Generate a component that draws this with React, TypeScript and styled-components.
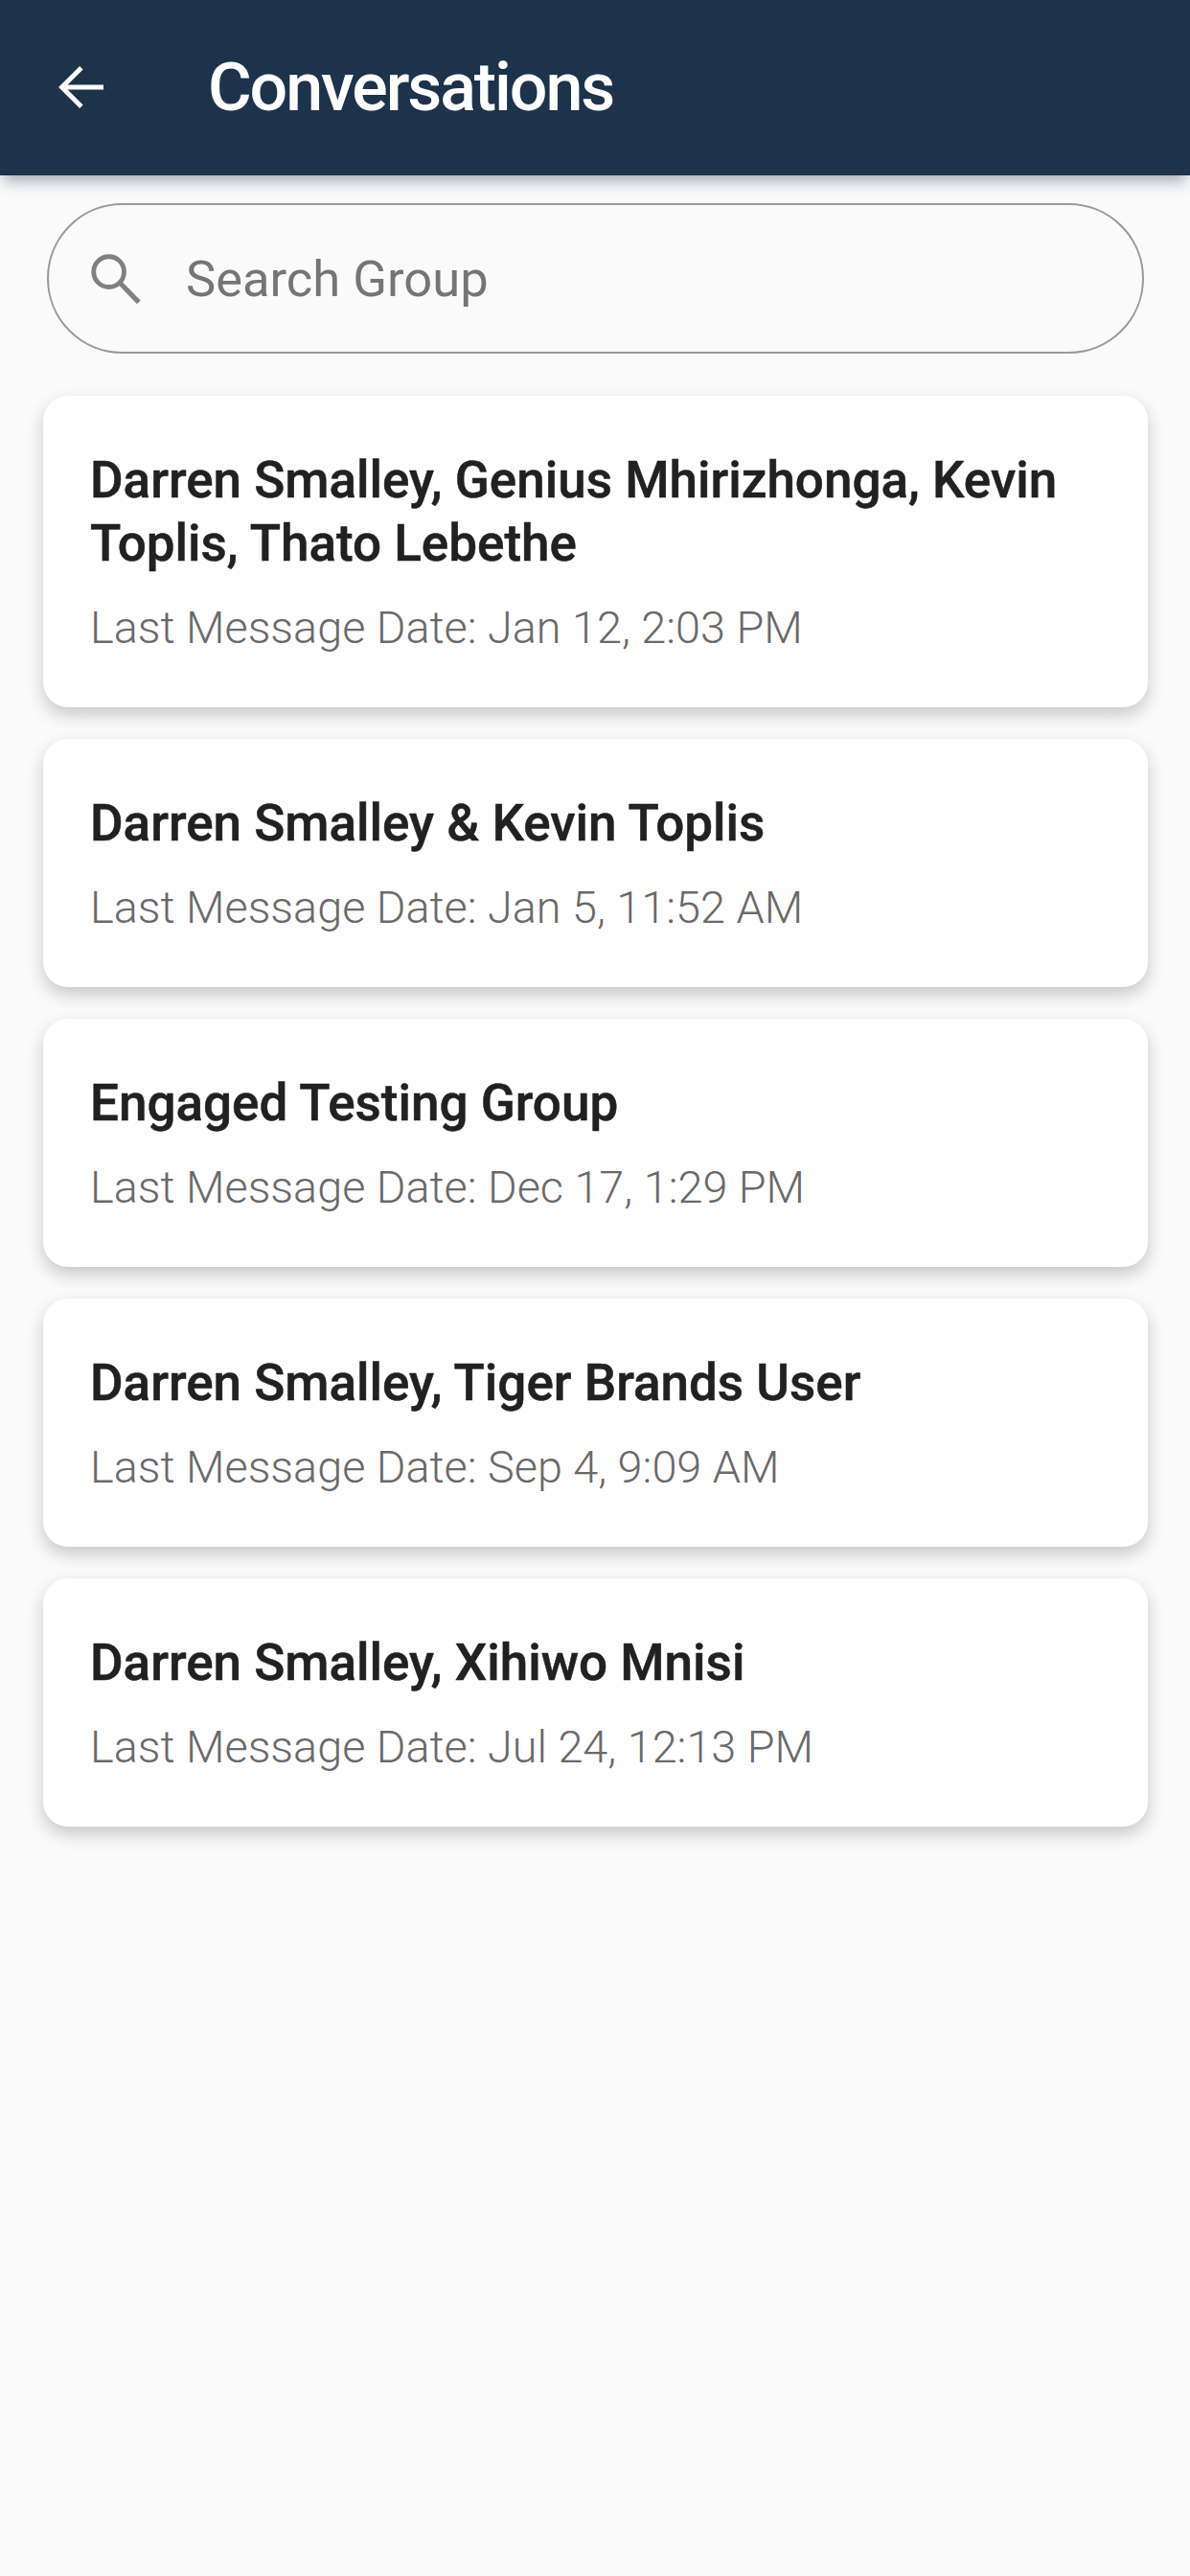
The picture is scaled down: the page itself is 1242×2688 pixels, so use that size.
import styled, { createGlobalStyle } from "styled-components";

const conversations = [
  {
    id: 1,
    title: "Darren Smalley, Genius Mhirizhonga, Kevin Toplis, Thato Lebethe",
    date: "Jan 12, 2:03 PM",
  },
  { id: 2, title: "Darren Smalley & Kevin Toplis", date: "Jan 5, 11:52 AM" },
  { id: 3, title: "Engaged Testing Group", date: "Dec 17, 1:29 PM" },
  { id: 4, title: "Darren Smalley, Tiger Brands User", date: "Sep 4, 9:09 AM" },
  { id: 5, title: "Darren Smalley, Xihiwo Mnisi", date: "Jul 24, 12:13 PM" },
];

const App = () => {
  return (
    <Page>
      <GlobalStyle />
      <Header>
        <BackButton aria-label="Back">
          <svg width="66" height="66" viewBox="0 0 24 24" fill="none">
            <path
              d="M20 12H4.6M11.6 4.6L4.2 12l7.4 7.4"
              stroke="#ffffff"
              strokeWidth="1.8"
            />
          </svg>
        </BackButton>
        <Title>Conversations</Title>
      </Header>

      <SearchBar>
        <svg width="68" height="68" viewBox="0 0 24 24" fill="none">
          <circle cx="9.4" cy="9.4" r="5.6" stroke="#808080" strokeWidth="1.7" />
          <path d="M13.6 13.6l6.8 7" stroke="#808080" strokeWidth="1.8" />
        </svg>
        <SearchInput placeholder="Search Group" />
      </SearchBar>

      <List>
        {conversations.map((item) => (
          <Card key={item.id}>
            <CardTitle>{item.title}</CardTitle>
            <CardDate>Last Message Date: {item.date}</CardDate>
          </Card>
        ))}
      </List>
    </Page>
  );
};

export default App;

const GlobalStyle = createGlobalStyle`
  html, body {
    margin: 0;
    padding: 0;
    background: #fafafa;
  }
  * {
    box-sizing: border-box;
  }
`;

const Page = styled.div`
  width: 1242px;
  height: 2688px;
  overflow: hidden;
  background: #fafafa;
  font-family: "Roboto", "Liberation Sans", sans-serif;
`;

const Header = styled.header`
  height: 183px;
  display: flex;
  align-items: center;
  gap: 98px;
  padding-left: 53px;
  background: #1d324b;
  box-shadow: 0 10px 14px -4px rgba(40, 50, 80, 0.4);
`;

const BackButton = styled.button`
  display: flex;
  padding: 0;
  border: none;
  background: none;
  margin-top: -2px;
`;

const Title = styled.h1`
  margin: 0 0 2px;
  font-size: 70px;
  font-weight: 500;
  line-height: 80px;
  letter-spacing: -2.1px;
  color: #ffffff;
`;

const SearchBar = styled.div`
  display: flex;
  align-items: center;
  gap: 39px;
  height: 157px;
  margin: 29px 48px 0 49px;
  padding-left: 36px;
  border: 2px solid #999999;
  border-radius: 79px;
  background: #fafafa;
`;

const SearchInput = styled.input`
  flex: 1;
  border: none;
  outline: none;
  padding: 0;
  background: transparent;
  font-family: inherit;
  font-size: 52.5px;
  color: #757575;

  &::placeholder {
    color: #757575;
    opacity: 1;
  }
`;

const List = styled.main`
  display: flex;
  flex-direction: column;
  gap: 33px;
  margin: 44px 44px 0 45px;
`;

const Card = styled.article`
  display: flex;
  flex-direction: column;
  gap: 27px;
  padding: 55px 48px 55px 49px;
  border-radius: 26px;
  background: #ffffff;
  box-shadow: 0 8px 18px rgba(0, 0, 0, 0.2);
`;

const CardTitle = styled.div`
  font-size: 53px;
  font-weight: 500;
  line-height: 66px;
  color: #212121;
  -webkit-text-stroke: 0.5px #212121;
`;

const CardDate = styled.div`
  font-size: 46.8px;
  font-weight: 300;
  line-height: 56px;
  color: #6a6a6a;
`;
